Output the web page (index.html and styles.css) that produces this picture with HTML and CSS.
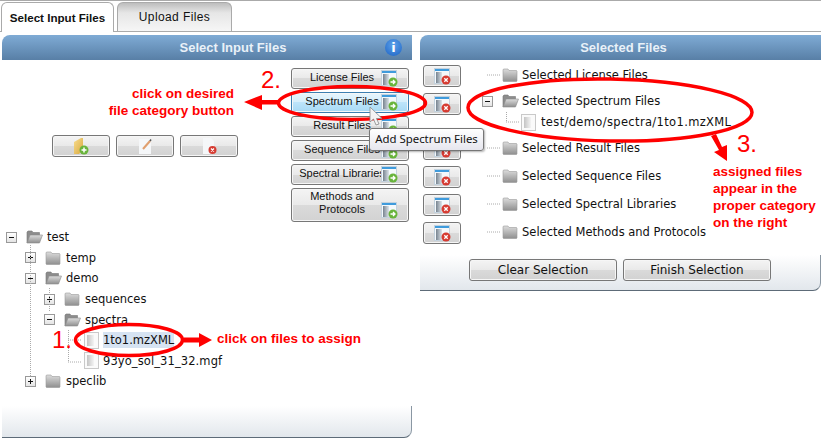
FILE: index.html
```html
<!DOCTYPE html>
<html lang="en">
<head>
   <meta charset="UTF-8">
   <title>Select Input Files</title>
   <link rel="stylesheet" href="styles.css">
</head>
<body>

<svg class="defs" width="0" height="0">
   <defs>
      <linearGradient id="gFolder" x1="0" y1="0" x2="0" y2="1"><stop offset="0" stop-color="#dcdcdc"/><stop offset="1" stop-color="#8f8f8f"/></linearGradient>
      <linearGradient id="gPane" x1="0" y1="0" x2="1" y2="0"><stop offset="0" stop-color="#77838f"/><stop offset="1" stop-color="#dde4ea"/></linearGradient>
      <linearGradient id="gStrip" x1="0" y1="0" x2="1" y2="0"><stop offset="0" stop-color="#c4c4c4"/><stop offset="1" stop-color="#f4f4f4"/></linearGradient>
      <linearGradient id="gYellow" x1="0" y1="0" x2="1" y2="1"><stop offset="0" stop-color="#f7dc8e"/><stop offset="1" stop-color="#d9a93f"/></linearGradient>
      <symbol id="folder" viewBox="0 0 16 14">
         <path d="M1 3V1.500L2 1h4l1 1.500h7.500l.5.500v10l-.5.500h-13L1 13z" fill="url(#gFolder)" stroke="#9a9a9a" stroke-width=".6"/>
      </symbol>
      <symbol id="folder-open" viewBox="0 0 17 14">
         <path d="M1 13V2l1-1h4l1 1.500h6.500V5" fill="#8c8c8c" stroke="#777" stroke-width=".6"/>
         <path d="M1 13l3-8h12.500l-3 8z" fill="url(#gFolder)" stroke="#8c8c8c" stroke-width=".6"/>
      </symbol>
      <symbol id="doc" viewBox="0 0 15 17">
         <rect x=".5" y=".5" width="14" height="16" fill="#fafafa" stroke="#c9c9c9"/>
         <rect x="3" y="3" width="7" height="11" fill="url(#gStrip)"/>
      </symbol>
      <symbol id="win-add" viewBox="0 0 17 17">
         <rect x=".5" y=".5" width="15" height="15" fill="#f4f8fb" stroke="#c3d2de"/>
         <rect x="1" y="1" width="14" height="2" fill="#3f9bdc"/>
         <rect x="2" y="4" width="6" height="11" fill="url(#gPane)"/>
         <circle cx="12" cy="12" r="4.500" fill="#69b43c"/>
         <path d="M9.500 12h4M12 10l2 2-2 2" fill="none" stroke="#fff" stroke-width="1.300"/>
      </symbol>
      <symbol id="win-del" viewBox="0 0 17 17">
         <rect x=".5" y=".5" width="15" height="15" fill="#f4f8fb" stroke="#c3d2de"/>
         <rect x="1" y="1" width="14" height="2" fill="#3f9bdc"/>
         <rect x="2" y="4" width="6" height="11" fill="url(#gPane)"/>
         <circle cx="12" cy="12" r="4.500" fill="#d63c33"/>
         <path d="M10.300 10.300l3.400 3.400M13.700 10.300l-3.400 3.400" stroke="#fff" stroke-width="1.300"/>
      </symbol>
   </defs>
</svg>

<div class="tabs">
   <div class="tab tab-active">Select Input Files</div>
   <div class="tab">Upload Files</div>
</div>

<div class="panels">
   <section class="panel panel-left">
      <header class="panel-head">
         Select Input Files
         <span class="info">i</span>
      </header>

      <div class="left-top">
         <div class="tool-btns">
            <button class="btn tool-btn">
               <svg width="20" height="20" viewBox="0 0 20 20">
                  <path d="M3 18V6l7-4h2v12l-4 4z" fill="url(#gYellow)"/>
                  <circle cx="13" cy="14" r="4.500" fill="#69b43c"/>
                  <path d="M10.500 14h5M13 11.500v5" stroke="#fff" stroke-width="1.500"/>
               </svg>
            </button>
            <button class="btn tool-btn">
               <svg width="20" height="20" viewBox="0 0 20 20">
                  <rect x="4" y="3" width="12" height="15" fill="#f5f7f9"/>
                  <path d="M8 13l7-8" stroke="#e0a070" stroke-width="2"/>
                  <path d="M15 5l1-1.500" stroke="#555" stroke-width="1.500"/>
               </svg>
            </button>
            <button class="btn tool-btn">
               <svg width="20" height="20" viewBox="0 0 20 20">
                  <path d="M4 2h8l3 3v13H4z" fill="#f5f7f9"/>
                  <circle cx="13.500" cy="14" r="4" fill="#d63c33"/>
                  <path d="M12 12.500l3 3M15 12.500l-3 3" stroke="#fff" stroke-width="1.200"/>
               </svg>
            </button>
         </div>

         <div class="cat-btns">
            <button class="btn cat-btn"><span class="cat-label">License Files</span><svg class="cat-icon"><use href="#win-add"/></svg></button>
            <button class="btn cat-btn cat-hover"><span class="cat-label">Spectrum Files</span><svg class="cat-icon"><use href="#win-add"/></svg></button>
            <button class="btn cat-btn"><span class="cat-label">Result Files</span><svg class="cat-icon"><use href="#win-add"/></svg></button>
            <button class="btn cat-btn"><span class="cat-label">Sequence Files</span><svg class="cat-icon"><use href="#win-add"/></svg></button>
            <button class="btn cat-btn"><span class="cat-label">Spectral Libraries</span><svg class="cat-icon"><use href="#win-add"/></svg></button>
            <button class="btn cat-btn cat-tall"><span class="cat-label">Methods and<br>Protocols</span><svg class="cat-icon"><use href="#win-add"/></svg></button>
         </div>
      </div>

      <ul class="tree">
         <li class="node lvl0"><i class="toggle minus"></i><svg class="fld-open"><use href="#folder-open"/></svg><span>test</span></li>
         <li class="node lvl1"><i class="toggle plus"></i><svg class="fld"><use href="#folder"/></svg><span>temp</span></li>
         <li class="node lvl1"><i class="toggle minus"></i><svg class="fld-open"><use href="#folder-open"/></svg><span>demo</span></li>
         <li class="node lvl2"><i class="toggle plus"></i><svg class="fld"><use href="#folder"/></svg><span>sequences</span></li>
         <li class="node lvl2"><i class="toggle minus"></i><svg class="fld-open"><use href="#folder-open"/></svg><span>spectra</span></li>
         <li class="node lvl3"><svg class="file"><use href="#doc"/></svg><span class="picked">1to1.mzXML</span></li>
         <li class="node lvl3"><svg class="file"><use href="#doc"/></svg><span class="file-name">93yo_sol_31_32.mgf</span></li>
         <li class="node lvl1"><i class="toggle plus"></i><svg class="fld"><use href="#folder"/></svg><span>speclib</span></li>
      </ul>

      <div class="panel-foot"></div>
   </section>

   <section class="panel panel-right">
      <header class="panel-head">Selected Files</header>

      <div class="right-body">
         <div class="del-btns">
            <button class="btn del-btn"><svg class="cat-icon"><use href="#win-del"/></svg></button>
            <button class="btn del-btn"><svg class="cat-icon"><use href="#win-del"/></svg></button>
            <button class="btn del-btn del-after-child"><svg class="cat-icon"><use href="#win-del"/></svg></button>
            <button class="btn del-btn"><svg class="cat-icon"><use href="#win-del"/></svg></button>
            <button class="btn del-btn"><svg class="cat-icon"><use href="#win-del"/></svg></button>
            <button class="btn del-btn"><svg class="cat-icon"><use href="#win-del"/></svg></button>
         </div>

         <ul class="sel-tree">
            <li class="sel-row sel-license"><svg class="fld"><use href="#folder"/></svg><span>Selected License Files</span></li>
            <li class="sel-row sel-open"><i class="toggle minus"></i><svg class="fld-open"><use href="#folder-open"/></svg><span>Selected Spectrum Files</span></li>
            <li class="sel-row sel-child"><svg class="file"><use href="#doc"/></svg><span>test/demo/spectra/1to1.mzXML</span></li>
            <li class="sel-row"><svg class="fld"><use href="#folder"/></svg><span>Selected Result Files</span></li>
            <li class="sel-row"><svg class="fld"><use href="#folder"/></svg><span>Selected Sequence Files</span></li>
            <li class="sel-row"><svg class="fld"><use href="#folder"/></svg><span>Selected Spectral Libraries</span></li>
            <li class="sel-row"><svg class="fld"><use href="#folder"/></svg><span>Selected Methods and Protocols</span></li>
         </ul>
      </div>

      <div class="panel-foot foot-btns">
         <button class="btn foot-btn">Clear Selection</button>
         <button class="btn foot-btn">Finish Selection</button>
      </div>
   </section>
</div>

<!-- tree guides, callout ovals and arrows -->
<svg class="overlay" width="821" height="439" viewBox="0 0 821 439">
   <g class="guides">
      <path d="M30.500 245V376M49.500 288V312M68.500 330V362M68 340H82M68 362H82"/>
      <path d="M487 75H500M506.500 112V122M506 122H519M487 148H500M487 176H500M487 204H500M487 232H500"/>
   </g>
   <g class="callout">
      <ellipse cx="352" cy="103" rx="73.500" ry="16.500"/>
      <ellipse cx="610" cy="110" rx="142" ry="31" transform="rotate(1 610 110)"/>
      <ellipse cx="129" cy="340" rx="53.500" ry="15.500"/>
   </g>
   <g class="callout-fill">
      <path d="M262 100H279V104.500H262V110L244 102 262 95z"/>
      <path d="M184 337.500H199V333L212 340 199 347V342.500H184z"/>
      <path d="M711 136L716 134 722 147 727 145 727 161 714 152 719 150z"/>
   </g>
   <path class="cursor" d="M370 107V122L373.500 119 376 125 379 124 376.500 118.500H382z"/>
</svg>

<div class="tooltip">Add Spectrum Files</div>

<div class="note note-num num-2">2.</div>
<div class="note note-num num-1">1.</div>
<div class="note note-num num-3">3.</div>
<div class="note note-cat">click on desired<br>file category button</div>
<div class="note note-files">click on files to assign</div>
<div class="note note-right">assigned files<br>appear in the<br>proper category<br>on the right</div>

</body>
</html>
```

FILE: styles.css
```css
html, body {
   margin: 0;
   height: 100%;
   overflow: hidden;
   background: #fff;
}

body {
   position: relative;
   font-family: "DejaVu Sans", sans-serif;
   color: #111;
}

ul {
   list-style: none;
   margin: 0;
   padding: 0;
}

svg {
   display: block;
   flex: none;
}

.defs {
   position: absolute;
}

/* tabs */
.tabs {
   display: flex;
   gap: 3px;
   height: 32px;
   padding: 1px 0 0 1px;
   border-top: 1px solid #aaa;
   border-bottom: 1px solid #aaa;
   box-sizing: border-box;
}

.tab {
   width: 115px;
   height: 29px;
   box-sizing: border-box;
   border: 1px solid #aaa;
   border-bottom: 0;
   border-radius: 6px 6px 0 0;
   background: linear-gradient(#bdbdbd, #e6e6e6 35%, #f6f6f6);
   font: 12px/29px "Liberation Sans", sans-serif;
   letter-spacing: .4px;
   text-align: center;
}

.tab-active {
   width: 113px;
   height: 30px;
   background: #fff;
   font-size: 11.600px;
   font-weight: bold;
   letter-spacing: 0;
}

/* panels */
.panels {
   display: flex;
   align-items: flex-start;
   gap: 8px;
   padding: 3px 0 0 2px;
}

.panel {
   display: flex;
   flex-direction: column;
   box-sizing: border-box;
}

.panel-left {
   width: 410px;
   height: 403px;
}

.panel-right {
   width: 401px;
   height: 256px;
}

.panel-head {
   position: relative;
   flex: none;
   height: 25px;
   border-radius: 8px 0 0 0;
   background: linear-gradient(#7fabd5, #587fa6);
   color: #e9f1f8;
   font: bold 13px/25px "Liberation Sans", sans-serif;
   text-align: center;
}

.panel-left .panel-head {
   padding-left: 52px;
}

.panel-right .panel-head {
   padding-left: 6px;
}

.info {
   position: absolute;
   top: 4px;
   right: 10px;
   width: 17px;
   height: 17px;
   border-radius: 50%;
   background: radial-gradient(circle at 50% 35%, #5da2ea, #1c62c4);
   color: #fff;
   font: bold 13px/17px "DejaVu Sans", sans-serif;
}

.panel-foot {
   flex: none;
   margin-top: auto;
   height: 32px;
   box-sizing: border-box;
   border-right: 1px solid #8a97a3;
   border-bottom: 1px solid #5d6b78;
   border-radius: 0 0 8px 0;
   background: linear-gradient(#fff, #e2e7ec);
}

/* buttons */
.btn {
   display: block;
   padding: 0;
   box-sizing: border-box;
   border: 1px solid #777;
   border-radius: 3px;
   background: linear-gradient(#f4f4f4, #e9e9e9 50%, #dadada 50%, #d2d2d2);
   box-shadow: inset 0 0 0 1px #f6f6f6;
   color: #111;
   font-family: "DejaVu Sans", sans-serif;
}

.left-top {
   display: flex;
   justify-content: space-between;
   padding: 8px 3px 0 50px;
}

.tool-btns {
   display: flex;
   gap: 6px;
   margin-top: 67px;
   height: 22px;
}

.tool-btn {
   display: flex;
   align-items: center;
   justify-content: center;
   width: 58px;
   height: 22px;
}

.cat-btns {
   display: flex;
   flex-direction: column;
   gap: 3px;
   width: 118px;
}

.cat-btn {
   display: flex;
   align-items: center;
   height: 21px;
   padding-right: 10px;
   font-family: "Liberation Sans", sans-serif;
   font-size: 11px;
   line-height: 13px;
}

.cat-label {
   flex: 1;
   margin-right: -11px;
   margin-bottom: 2px;
   text-align: center;
   white-space: nowrap;
}

.cat-icon {
   width: 17px;
   height: 17px;
}

.cat-hover {
   border-color: #3c7fb1;
   background: linear-gradient(#e6f5fd, #d5eefb 50%, #bde4fa 50%, #a7d9f5);
}

.cat-tall {
   height: 34px;
   align-items: flex-end;
   padding-bottom: 2px;
}

.cat-tall .cat-label {
   align-self: center;
}

/* left tree */
.tree {
   margin-top: 5px;
   font-size: 11.500px;
}

.node {
   display: flex;
   align-items: center;
   height: 20.600px;
   white-space: nowrap;
}

.lvl0 { padding-left: 4px; }
.lvl1 { padding-left: 23px; }
.lvl2 { padding-left: 42px; }
.lvl3 { padding-left: 82px; }

.toggle {
   position: relative;
   flex: none;
   width: 11px;
   height: 11px;
   margin-right: 9px;
   box-sizing: border-box;
   border: 1px solid #999;
   background: linear-gradient(#fff, #e4e4e4);
}

.toggle::before {
   content: "";
   position: absolute;
   left: 2px;
   top: 4px;
   width: 5px;
   height: 1px;
   background: #111;
}

.plus::after {
   content: "";
   position: absolute;
   left: 4px;
   top: 2px;
   width: 1px;
   height: 5px;
   background: #111;
}

.fld {
   width: 16px;
   height: 14px;
   margin-right: 5px;
}

.fld-open {
   width: 17px;
   height: 14px;
   margin-right: 4px;
}

.file {
   width: 15px;
   height: 17px;
   margin-right: 4px;
}

.picked {
   background: #d6e3f2;
   line-height: 16px;
}

.file-name {
   letter-spacing: .1px;
}

/* right side */
.right-body {
   display: flex;
}

.del-btns {
   display: flex;
   flex-direction: column;
   gap: 6px;
   padding: 5px 0 0 3px;
}

.del-btn {
   display: flex;
   align-items: center;
   justify-content: center;
   width: 38px;
   height: 22px;
}

.del-after-child {
   margin-top: 17px;
}

.sel-tree {
   padding-top: 5px;
   font-size: 11.500px;
}

.sel-row {
   display: flex;
   align-items: center;
   height: 20px;
   margin-bottom: 8px;
   padding-left: 41px;
   white-space: nowrap;
}

.sel-row .fld {
   margin-right: 4px;
}

.sel-row .fld-open {
   margin-right: 3px;
}

.sel-license {
   margin-bottom: 6px;
}

.sel-open {
   margin-bottom: 1px;
   padding-left: 21px;
}

.sel-child {
   margin-bottom: 6px;
   padding-left: 60px;
   letter-spacing: .35px;
}

.sel-child .file {
   margin-right: 5px;
}

.foot-btns {
   display: flex;
   gap: 6px;
   height: 36px;
   padding: 4px 0 0 49px;
}

.foot-btn {
   width: 148px;
   height: 22px;
   font-size: 12px;
}

/* annotations */
.overlay {
   position: absolute;
   top: 0;
   left: 0;
   pointer-events: none;
}

.guides path {
   fill: none;
   stroke: #aaa;
   stroke-dasharray: 1 1;
}

.callout ellipse {
   fill: none;
   stroke: #f00;
   stroke-width: 3.500;
}

.callout-fill path {
   fill: #f00;
}

.cursor {
   fill: #f4f4f4;
   stroke: #888;
   stroke-width: .8;
}

.tooltip {
   position: absolute;
   left: 369px;
   top: 128px;
   width: 115px;
   height: 23px;
   box-sizing: border-box;
   border: 1px solid #767676;
   border-radius: 3px;
   background: linear-gradient(#fff, #e6e6ee);
   box-shadow: 1px 1px 2px rgba(0, 0, 0, .3);
   font-family: "Noto Sans", sans-serif;
   font-size: 11.400px;
   line-height: 20px;
   text-align: center;
   white-space: nowrap;
}

.note {
   position: absolute;
   color: #f00;
   font: bold 13.500px/17px "Liberation Sans", sans-serif;
   white-space: nowrap;
}

.note-num {
   font-weight: normal;
   font-size: 24px;
   line-height: 28px;
}

.num-2 { left: 261px; top: 66px; }
.num-1 { left: 52px; top: 326px; }
.num-3 { left: 737px; top: 130px; }

.note-cat {
   right: 587px;
   top: 85px;
   text-align: right;
}

.note-files {
   left: 217px;
   top: 330px;
}

.note-right {
   left: 713px;
   top: 163px;
}
```
